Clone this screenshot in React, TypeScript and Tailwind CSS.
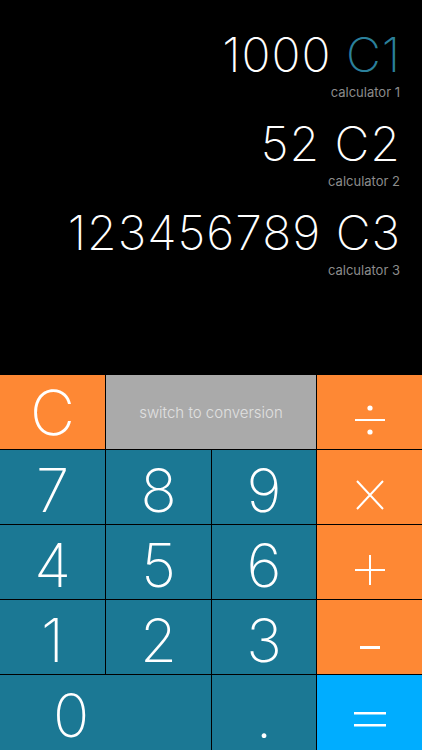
import React from "react";

const FONT = { fontFamily: '"Inter", "Helvetica Neue", "Liberation Sans", sans-serif' };

function Entry({ value, name, label, active }: { value: string; name: string; label: string; active?: boolean }) {
  return (
    <div className="flex flex-col items-end">
      <div className="h-[48px] text-[48px] leading-none font-extralight text-white whitespace-nowrap tracking-[1px] mr-[-1px]">
        {value} <span className={active ? "text-[#2b809b]" : "text-white"}>{name}</span>
      </div>
      <div className="mt-[5px] h-[16px] text-[13px] leading-[16px] text-[#8c8c8c] font-normal">{label}</div>
    </div>
  );
}

function Key({ children, className = "" }: { children: React.ReactNode; className?: string }) {
  return (
    <div className={`flex items-center justify-center bg-[#1b7894] text-white text-[60px] leading-none font-extralight ${className}`}>
      <span className="translate-y-[3px]">{children}</span>
    </div>
  );
}

export default function App() {
  return (
    <div className="w-[422px] h-[750px] bg-black overflow-hidden" style={FONT}>
      <div className="h-[375px] flex flex-col items-end gap-[20px] pt-[31px] pr-[22px]">
        <Entry value="1000" name="C1" label="calculator 1" active />
        <Entry value="52" name="C2" label="calculator 2" />
        <Entry value="123456789" name="C3" label="calculator 3" />
      </div>
      <div className="grid grid-cols-[105px_105px_104px_105px] grid-rows-[74px_74px_74px_74px_75px] gap-px bg-black h-[375px]">
        <div className="flex items-center justify-center bg-[#fe8834] text-white text-[62px] leading-none font-extralight">
          <span className="translate-y-[1px]">C</span>
        </div>
        <div className="col-span-2 flex items-center justify-center bg-[#aaaaaa] text-[#e0e0e0] text-[15px] font-light">
          <span className="translate-y-[1px]">switch to conversion</span>
        </div>
        <div className="flex items-center justify-center bg-[#fe8834]">
          <svg width="32" height="32" viewBox="0 0 32 32" className="translate-y-[8px]" aria-label="divide">
            <circle cx="16" cy="4" r="2.6" fill="white" />
            <rect x="1" y="15" width="30" height="2" fill="white" />
            <circle cx="16" cy="28" r="2.6" fill="white" />
          </svg>
        </div>

        <Key>7</Key>
        <Key>8</Key>
        <Key>9</Key>
        <div className="flex items-center justify-center bg-[#fe8834]">
          <svg width="28" height="30" viewBox="0 0 28 30" className="translate-y-[8px]" aria-label="multiply">
            <path d="M1 1 L27 29 M27 1 L1 29" stroke="white" strokeWidth="2" fill="none" />
          </svg>
        </div>

        <Key>4</Key>
        <Key>5</Key>
        <Key>6</Key>
        <div className="flex items-center justify-center bg-[#fe8834]">
          <svg width="30" height="30" viewBox="0 0 30 30" className="translate-y-[8px]" aria-label="plus">
            <rect x="0" y="14" width="30" height="2" fill="white" />
            <rect x="14" y="0" width="2" height="30" fill="white" />
          </svg>
        </div>

        <Key>1</Key>
        <Key>2</Key>
        <Key>3</Key>
        <div className="flex items-center justify-center bg-[#fe8834]">
          <svg width="20" height="3" viewBox="0 0 20 3" className="translate-y-[10px]" aria-label="minus">
            <rect x="0" y="0" width="20" height="3" fill="white" />
          </svg>
        </div>

        <div className="col-span-2 flex items-center bg-[#1b7894] text-white text-[60px] leading-none font-extralight">
          <div className="w-[142px] flex justify-center">
            <span className="translate-y-[2px]">0</span>
          </div>
        </div>
        <Key>.</Key>
        <div className="flex items-center justify-center bg-[#00adff]">
          <svg width="32" height="15" viewBox="0 0 32 15" className="translate-y-[7px]" aria-label="equals">
            <rect x="0" y="0" width="32" height="2.5" fill="white" />
            <rect x="0" y="12" width="32" height="2.5" fill="white" />
          </svg>
        </div>
      </div>
    </div>
  );
}
